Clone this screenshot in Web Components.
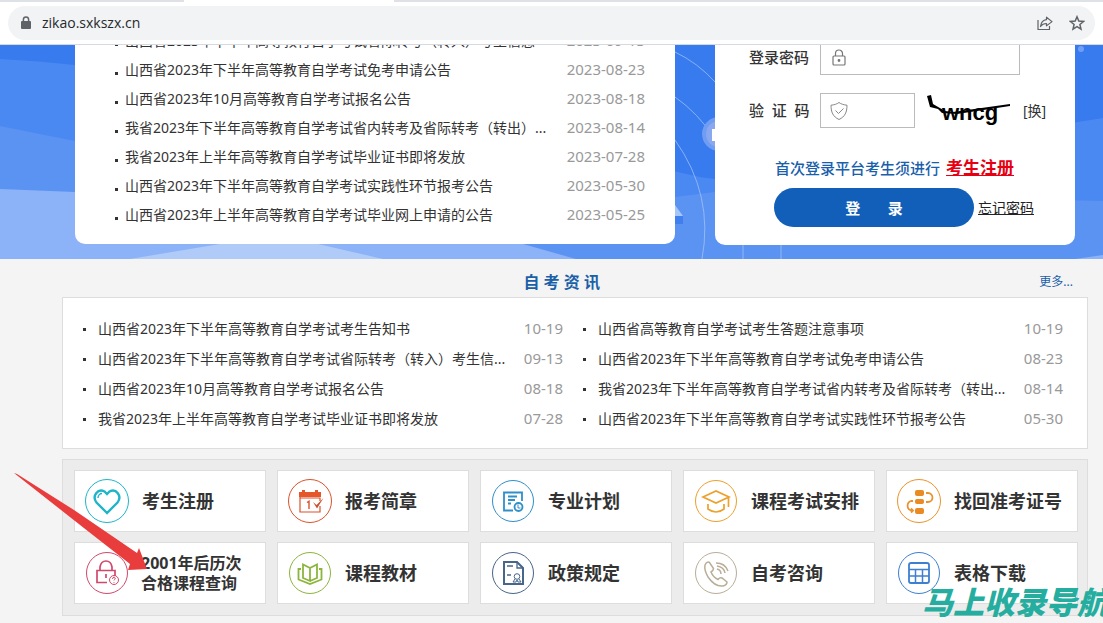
<!DOCTYPE html>
<html lang="zh-CN">
<head>
<meta charset="utf-8">
<title>自考资讯</title>
<style>
  html, body { margin: 0; }
  body {
    position: relative;
    min-height: 100vh;
    overflow: hidden;
    background: #f4f4f4;
    color: #333;
    font: 14px/20px "Noto Sans", "Noto Sans CJK SC", sans-serif;
  }
</style>
</head>
<body>
<browser-bar address="zikao.sxkszx.cn"></browser-bar>
<hero-banner>
  <notice-list slot="notices">
    <notice-item date="2023-09-13">山西省2023年下半年高等教育自学考试省际转考（转入）考生信息</notice-item>
    <notice-item date="2023-08-23">山西省2023年下半年高等教育自学考试免考申请公告</notice-item>
    <notice-item date="2023-08-18">山西省2023年10月高等教育自学考试报名公告</notice-item>
    <notice-item date="2023-08-14">我省2023年下半年高等教育自学考试省内转考及省际转考（转出）...</notice-item>
    <notice-item date="2023-07-28">我省2023年上半年高等教育自学考试毕业证书即将发放</notice-item>
    <notice-item date="2023-05-30">山西省2023年下半年高等教育自学考试实践性环节报考公告</notice-item>
    <notice-item date="2023-05-25">山西省2023年上半年高等教育自学考试毕业网上申请的公告</notice-item>
  </notice-list>
  <login-card slot="login"></login-card>
</hero-banner>
<news-panel>
  <span slot="title">自 考 资 讯</span>
  <notice-item compact date="10-19">山西省2023年下半年高等教育自学考试考生告知书</notice-item>
  <notice-item compact date="10-19">山西省高等教育自学考试考生答题注意事项</notice-item>
  <notice-item compact date="09-13">山西省2023年下半年高等教育自学考试省际转考（转入）考生信...</notice-item>
  <notice-item compact date="08-23">山西省2023年下半年高等教育自学考试免考申请公告</notice-item>
  <notice-item compact date="08-18">山西省2023年10月高等教育自学考试报名公告</notice-item>
  <notice-item compact date="08-14">我省2023年下半年高等教育自学考试省内转考及省际转考（转出...</notice-item>
  <notice-item compact date="07-28">我省2023年上半年高等教育自学考试毕业证书即将发放</notice-item>
  <notice-item compact date="05-30">山西省2023年下半年高等教育自学考试实践性环节报考公告</notice-item>
</news-panel>
<service-grid>
  <service-tile icon="heart">考生注册</service-tile>
  <service-tile icon="calendar">报考简章</service-tile>
  <service-tile icon="plan">专业计划</service-tile>
  <service-tile icon="cap">课程考试安排</service-tile>
  <service-tile icon="flow">找回准考证号</service-tile>
  <service-tile icon="lock" small>2001年后历次<br>合格课程查询</service-tile>
  <service-tile icon="book">课程教材</service-tile>
  <service-tile icon="policy">政策规定</service-tile>
  <service-tile icon="phone">自考咨询</service-tile>
  <service-tile icon="table">表格下载</service-tile>
</service-grid>
<pointer-arrow></pointer-arrow>
<site-mark>马上收录导航</site-mark>

<script>
class Base extends HTMLElement {
  constructor() {
    super();
    this.attachShadow({ mode: "open" });
  }
  connectedCallback() {
    this.shadowRoot.innerHTML = `<style>*{box-sizing:border-box}a{color:inherit}svg{display:block;flex:none}${this.css()}</style>${this.html()}`;
  }
}

customElements.define("browser-bar", class extends Base {
  css() { return `
    :host { display: block; background: #fff; border-bottom: 1px solid #d5d9e2; }
    .tabs { display: flex; height: 2px; }
    .tabs i { background: #dee1e6; flex: 0 0 184px; }
    .tabs i:last-child { flex: 1; margin-left: 210px; }
    .box { display: flex; align-items: center; height: 34px; margin: 4px 8px; padding: 0 10px 0 12px; border-radius: 17px; background: #f1f3f4; }
    input { flex: 1; min-width: 0; border: 0; padding: 0; margin-left: 10px; background: none; color: #27292c; font: 14px/20px "Open Sans", sans-serif; outline: 0; }
    button { border: 0; padding: 0; background: none; margin-left: 16px; }`; }
  html() { return `
    <div class="tabs"><i></i><i></i></div>
    <div class="box">
      <svg width="12" height="14" viewBox="0 0 12 14"><rect x="1" y="5" width="10" height="8" rx="1" fill="#5f6368"/><path d="M3.4 6V3.6a2.6 2.6 0 0 1 5.2 0V6" fill="none" stroke="#5f6368" stroke-width="1.5"/></svg>
      <input aria-label="地址" value="${this.getAttribute("address")}">
      <button aria-label="分享"><svg width="16" height="16" viewBox="0 0 16 16" fill="none" stroke="#5f6368" stroke-width="1.2" stroke-linejoin="round"><path d="M1 5v9.5h11.5V11"/><path d="M9.5 2.2 15 6.6l-5.500 4.300V8.500C7 8.500 5 9.300 3.500 11.500 4 7.500 6 5 9.500 4.600z"/></svg></button>
      <button aria-label="收藏"><svg width="16" height="16" viewBox="0 0 16 16" fill="none" stroke="#5f6368" stroke-width="1.500"><path d="m8 1.800 1.800 4.300 4.700.4-3.600 3 1.100 4.600L8 11.700l-4 2.400 1.100-4.600-3.600-3 4.700-.4z"/></svg></button>
    </div>`; }
});

customElements.define("hero-banner", class extends Base {
  css() { return `
    :host { position: relative; display: block; overflow: hidden; background: #377bee; }
    .bg { position: absolute; inset: 0; width: 100%; height: 100%; }
    .row { position: relative; display: grid; grid-template-columns: 5fr 3fr; gap: 40px; align-items: start; padding: 0 28px 14px 75px; }`; }
  html() { return `
    <svg class="bg" viewBox="0 0 1103 214" preserveAspectRatio="none">
      <path d="M0 14Q40 16 75 20L380 60 700 132 715 134 1103 73V214H0z" fill="#4a88f2"/>
      <path d="M0 81 75 96 500 165 675 152 715 147 1103 156V214H0z" fill="#5b93f2"/>
      <path d="M0 144 75 147 450 180 523 199 576 214H0zM1075 214 1103 210V214z" fill="#8cb2f7"/>
      <path d="M130 214 220 199H318L383 214z" fill="#b0cbf7"/>
      <g fill="none" stroke="#a9c8fb" stroke-opacity=".7"><path d="M675 7Q698 18 715 37M675 52Q698 68 715 94M743 214V199M781 214V199"/><path d="M675 95Q714 150 702 214"/></g>
      <circle cx="719" cy="89" r="17" fill="#6f9df3"/><circle cx="719" cy="89" r="13" fill="#8aa8f0"/><path d="M712 84h4v12h-4z" fill="#fff"/>
      <path d="M675 160v11h8z" fill="#a5c6fa"/><path d="M675 171h8v8h-8z" fill="#3f80ee"/><circle cx="1081" cy="4" r="3" fill="#6fa0f5"/>
    </svg>
    <div class="row"><slot name="notices"></slot><slot name="login"></slot></div>`; }
});

customElements.define("notice-list", class extends Base {
  css() { return `:host { display: block; margin-top: -19px; padding: 0 30px 15px 40px; background: #fff; border-radius: 0 0 10px 10px; }`; }
  html() { return `<slot></slot>`; }
});

customElements.define("notice-item", class extends Base {
  css() { return `
    :host { display: flex; align-items: center; height: 29px; min-width: 0; }
    :host([compact]) { height: 30px; }
    i { flex: none; width: 3px; height: 3px; margin: 8px 7px 0 0; background: #333; }
    :host([compact]) i { margin: 0 12px 0 0; }
    a { flex: 1; min-width: 0; white-space: nowrap; text-decoration: none; }
    time { padding-bottom: 2px; color: #999; font-size: 15px; }`; }
  html() { return `<i></i><a href="#"><slot></slot></a><time>${this.getAttribute("date")}</time>`; }
});

customElements.define("login-card", class extends Base {
  css() { return `
    :host { display: block; margin-top: -5px; padding: 0 24px 18px 34px; background: #fff; border-radius: 0 0 10px 10px; }
    .field { display: grid; grid-template-columns: 60px 1fr; column-gap: 11px; align-items: center; margin-bottom: 18px; }
    label { padding-bottom: 2px; font-size: 15px; font-weight: 500; white-space: nowrap; text-align: right; }
    .group { display: flex; align-items: center; }
    .input { display: flex; align-items: center; width: 200px; height: 35px; border: 1px solid #bbb; padding-left: 9px; }
    .input.short { width: 95px; }
    input { flex: 1; min-width: 0; border: 0; outline: 0; background: none; font: inherit; }
    .captcha { margin: 0 12px 0 12px; }
    .captcha text { font: bold 22px "Liberation Sans", sans-serif; }
    .swap { text-decoration: none; white-space: nowrap; }
    .tip { display: flex; align-items: center; height: 24px; margin: 28px 0 8px 26px; color: #1a5fac; font-size: 15px; font-weight: 500; white-space: nowrap; }
    .tip a { margin-left: 6px; color: #e60012; font-size: 17px; font-weight: 700; }
    .submit { display: flex; align-items: center; gap: 4px; margin-left: 25px; white-space: nowrap; color: #222; }
    .submit button { width: 200px; height: 39px; border: 0; border-radius: 20px; background: #115fb8; color: #fff; font: bold 15px/20px "Noto Sans", "Noto Sans CJK SC", sans-serif; white-space: pre; }`; }
  html() { return `
    <div class="field"><label for="pw">登录密码</label><div class="input">
      <svg width="18" height="20" viewBox="0 0 18 20" fill="none" stroke="#777" stroke-width="1.200"><rect x="3" y="8" width="12" height="9" rx="1"/><path d="M5.500 8V5.500a3.500 3.500 0 0 1 7 0V8"/><circle cx="9" cy="12.500" r=".8" fill="#555"/></svg>
      <input id="pw" type="password"></div></div>
    <div class="field"><label for="code">验&nbsp;&nbsp;证&nbsp;&nbsp;码</label><div class="group">
      <div class="input short"><svg width="18" height="20" viewBox="0 0 18 20" fill="none" stroke="#888"><path d="M9 1.500C7 3 4 4 1 4.200c0 7 2 11.500 8 14.300 6-2.800 8-7.300 8-14.300C14 4 11 3 9 1.500z"/><path d="m5.500 9.500 3 3 5-5"/></svg><input id="code"></div>
      <svg class="captcha" width="84" height="35" viewBox="0 0 84 35"><text x="15" y="27">wncg</text><path d="M0 3 4 2 6 11 18 18 26 19 83 11 83 13 30 21 15 20 11 16 3 14z"/></svg>
      <a class="swap" href="#">[换]</a></div></div>
    <div class="tip">首次登录平台考生须进行<a href="#">考生注册</a></div>
    <div class="submit"><button>登       录</button><a href="#">忘记密码</a></div>`; }
});

customElements.define("news-panel", class extends Base {
  css() { return `
    :host { display: block; margin: 0 15px 10px 62px; }
    header { display: flex; align-items: center; height: 38px; padding: 8px 15px 0 22px; color: #1a5fa8; }
    h2 { flex: 1; margin: 0; font-size: 16px; line-height: 24px; text-align: center; }
    a { font-size: 12px; text-decoration: none; }
    .box { display: grid; grid-template-columns: 1fr 1fr; column-gap: 20px; padding: 16px 24px 14px 20px; background: #fff; border: 1px solid #ddd; }`; }
  html() { return `<header><h2><slot name="title"></slot></h2><a href="#">更多...</a></header><div class="box"><slot></slot></div>`; }
});

customElements.define("service-grid", class extends Base {
  css() { return `:host { display: grid; grid-template-columns: repeat(5, minmax(0, 1fr)); gap: 10px 11px; margin: 0 15px 0 62px; padding: 10px 9px 11px 11px; background: #ececec; border: 1px solid #ddd; box-sizing: border-box; }`; }
  html() { return `<slot></slot>`; }
});

const icons = {
  heart: ["#1fb5c9", 21.500, `<path stroke-width="2.400" d="M22 34 11.500 23.500C6.500 17 13 9 19.500 12.500L22 15l2.500-2.500C31 9 37.500 17 32.500 23.500z"/><path stroke-width="1.400" d="M13 19c0-3 2-4.500 4-4.500"/>`],
  calendar: ["#d9532c", 21.500, `<path stroke-width="1.200" d="M12 18v15h20v-6M12 19h20v3"/><path fill="#e5562b" stroke="none" d="M11 13h3v-2h3v2h10v-2h3v2h3v5H11z"/><path stroke-width="1.400" d="m19 23.500 2-1.200V30"/><path fill="#c9532c" stroke="none" d="m25 23 3.500 3 7-7-6.500 10.500z"/>`],
  plan: ["#2f8fc9", 20.500, `<path stroke-width="1.800" d="M22 31.500h-9v-18h18V22M17 17.500h9M17 21h7M17 24.500h3"/><circle cx="27.500" cy="28" r="4" stroke-width="1.800"/><path d="M27 25.500V29h2.500"/>`],
  cap: ["#eda02c", 20.500, `<path stroke-width="1.700" d="m9 18 13-6 13 6-13 6zM14 25v5q8 6 16 0v-5M34.500 18v10"/>`],
  flow: ["#e8932c", 21.500, `<g fill="#ea8a22" stroke="none"><rect x="18" y="11" width="9" height="6" rx="2"/><rect x="18" y="20" width="9" height="5" rx="2"/><rect x="18" y="29" width="9" height="6" rx="2"/></g><path stroke-width="1.800" d="M29 14h2a4 4 0 0 1 0 9h-2M16 22h-2a5 5 0 0 0 0 9.500h2m-2-2 2 2-2 2"/>`],
  lock: ["#d0496b", 20.500, `<path stroke-width="1.700" d="M22 31.500H12v-12h18V25M15 19v-3q1-6 6-6t6 6v3M21 23v4"/><circle cx="29" cy="29" r="4.500"/><path d="M27.500 28q.2-2 1.700-1.800 2 .6.500 2.200l-.7 1M29 31v.8"/>`],
  book: ["#8cb53c", 20.500, `<path stroke-width="1.800" d="M22 17v13l-7-3V13.500zl7-3.500V27l-7 3M13 18h-2.500v10.500L22 33l11.500-4.500V18H31"/>`],
  policy: ["#48658a", 20.500, `<path stroke-width="2" d="M13 11h13l6 6v16H13z"/><path stroke-width="1.300" d="M26 11v6h6M16 15h6M16 24h4"/><circle cx="26" cy="25.500" r="2.800"/><path d="m24 28-2 3h3l1-2 1 2h3l-2-3"/>`],
  phone: ["#b9ad97", 20.500, `<path stroke-width="1.500" d="M11 14q2-4 4.500-2.500l4 6q0 2-2.500 3.500 2 5 7 7.500 2-2.500 4-1.500l5 4q0 3-4 4Q21 36 14 26q-4-7-3-12zM23 18q4 1 4 5M23 15q7 1 8 7M22 12q9 0 12 8"/>`],
  table: ["#3d7fd0", 20.500, `<rect x="12" y="12" width="20" height="20" rx="2" stroke-width="1.800"/><path stroke-width="1.500" d="M12 18.500h20M12 25h20M18.500 18.500V32M25.500 18.500V32"/>`]
};
customElements.define("service-tile", class extends Base {
  css() { return `
    :host { display: block; background: #fff; border: 1px solid #ddd; box-sizing: border-box; }
    a { display: flex; align-items: center; gap: 13px; height: 60px; padding-left: 10px; font-size: 18px; font-weight: 700; line-height: 24px; text-decoration: none; white-space: nowrap; }
    :host([small]) a { gap: 12px; font-size: 16px; line-height: 20px; }`; }
  html() {
    const [color, r, art] = icons[this.getAttribute("icon")];
    return `<a href="#"><svg width="44" height="44" viewBox="0 0 44 44" fill="none" stroke="${color}"><circle cx="22" cy="22" r="${r}"/>${art}</svg><span><slot></slot></span></a>`;
  }
});

customElements.define("pointer-arrow", class extends Base {
  css() { return `:host { position: absolute; left: 14px; top: 473px; pointer-events: none; }`; }
  html() { return `<svg width="136" height="98" viewBox="0 0 136 98"><path d="M0 0 3 1 60 37 123 80 125 75 133 96 114 97 116 91 75 59z" fill="#e93c3c"/></svg>`; }
});

customElements.define("site-mark", class extends Base {
  css() { return `:host { position: absolute; right: -5px; bottom: 2px; color: #25aea0; font: italic 900 31px/40px "Noto Sans CJK SC", sans-serif; white-space: nowrap; pointer-events: none; }`; }
  html() { return `<slot></slot>`; }
});
</script>
</body>
</html>
